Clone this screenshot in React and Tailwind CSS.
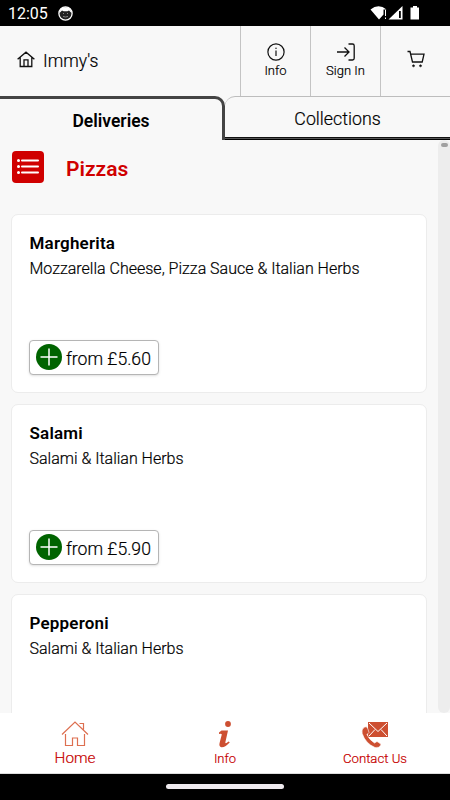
import React, { useState } from 'react';

const menuItems = [
    { id: 1, name: "Margherita", description: "Mozzarella Cheese, Pizza Sauce & Italian Herbs", price: "£5.60" },
    { id: 2, name: "Salami", description: "Salami & Italian Herbs", price: "£5.90" },
    { id: 3, name: "Pepperoni", description: "Salami & Italian Herbs", price: null },
];

function StatusBar() {
    return (
        <div className="h-[26px] shrink-0 bg-black text-white flex items-center justify-between pl-[8px] pr-[30px]">
            <div className="flex items-center gap-[10px] pt-[2px]">
                <span className="text-[16px] leading-none">12:05</span>
                <svg className="w-[15px] h-[15px] -mt-px" viewBox="0 0 15 15">
                    <circle cx="7.5" cy="7.5" r="6.6" fill="#222" stroke="#fff" strokeWidth="1.3" />
                    <path d="M1.500 7C1.800 3.300 4.200 1.200 7.500 1.200S13.200 3.300 13.500 7L11 4.500 9.400 5.200H5.600L4 4.500z" fill="#fff" />
                    <path d="M5 7.500h1M9 7.500h1M5 10.500q2.500 1 5 0" fill="none" stroke="#888" strokeWidth="1" />
                </svg>
            </div>
            <svg className="w-[50px] h-[16px]" viewBox="0 0 50 16">
                <path d="M0.500 4.500Q8.500-2 16.500 4.500H13.500V9.500L9 14.500z" fill="#fff" />
                <path d="M15.500 5v6M15.500 12.500v1.500" stroke="#fff" strokeWidth="1" />
                <path d="M32.500 1v13.500H18.500z" fill="#fff" />
                <path d="M29 6h1.800v7H29z" fill="#000" />
                <path d="M43 1h4v1.500h2V14.500h-8.500V2.500H43z" fill="#fff" />
            </svg>
        </div>
    );
}

function Header() {
    return (
        <header className="h-[70px] shrink-0 flex">
            <a href="#" className="flex-1 flex items-center gap-2 pl-[17px]">
                <svg className="w-[18px] h-[18px] -mt-[4px]" viewBox="0 0 18 18" fill="none" stroke="#111" strokeWidth="1.3">
                    <path d="M0.600 9.200 9 2.200l8.400 7M3.200 7.500V16.500h11.600V7.500M7 16.500V9.800h4V16.500" />
                </svg>
                <span className="text-[17.500px] font-light [-webkit-text-stroke:0.2px] pt-px">Immy's</span>
            </a>
            <button className="w-[70px] border-l border-[#c4c4c4] flex flex-col items-center justify-center pt-[2px]">
                <svg className="w-[18px] h-[18px]" viewBox="0 0 18 18" fill="none" stroke="#111" strokeWidth="1.2">
                    <circle cx="9" cy="9" r="8.100" />
                    <path d="M9 7.500V13" strokeWidth="1.200" />
                    <circle cx="9" cy="5.200" r="0.500" fill="#111" strokeWidth="0.400" />
                </svg>
                <span className="text-[13px] leading-[20px] font-light [-webkit-text-stroke:0.2px]">Info</span>
            </button>
            <button className="w-[70px] border-l border-[#c4c4c4] flex flex-col items-center justify-center pt-[2px]">
                <svg className="w-[18px] h-[18px]" viewBox="0 0 18 18" fill="none" stroke="#111" strokeWidth="1.300">
                    <path d="M0 9h11.500M7.500 4.500 12 9l-4.500 4.500M11.500 1h4q1.700 0 1.700 1.700V15.300q0 1.700-1.700 1.700H11.500" />
                </svg>
                <span className="text-[13px] leading-[20px] font-light [-webkit-text-stroke:0.2px]">Sign In</span>
            </button>
            <button className="w-[70px] border-l border-[#c4c4c4] flex items-center justify-center">
                <svg className="w-[18px] h-[18px] -mt-[4px]" viewBox="0 0 18 18" fill="none" stroke="#111" strokeWidth="1.300">
                    <path d="M0.500 1.500H3L5.500 12H15.200L17 4.200H3.700" />
                    <circle cx="6.500" cy="15.800" r="1" fill="#111" strokeWidth="0.600" />
                    <circle cx="13.500" cy="15.800" r="1" fill="#111" strokeWidth="0.600" />
                </svg>
            </button>
        </header>
    );
}

function MenuCard({ item }) {
    return (
        <div className="h-[179px] shrink-0 bg-white border border-[#ececec] rounded-[7px] px-[17px] pt-[16px] pb-[17px] flex flex-col">
            <h3 className="text-[17px] leading-[25px] font-semibold tracking-[0.2px] pl-[0.500px]">{item.name}</h3>
            <p className="text-[16px] leading-[22px] mt-[2px] pl-[0.500px] font-light [-webkit-text-stroke:0.2px] whitespace-nowrap">{item.description}</p>
            {item.price && (
                <button className="mt-auto self-start w-[130px] h-[35px] border border-[#b5b5b5] rounded-[4px] shadow-sm bg-white flex items-center gap-[4px] pl-[6px]">
                    <svg className="w-[26px] h-[26px] -mt-px" viewBox="0 0 26 26">
                        <circle cx="13" cy="13" r="13" fill="#006400" />
                        <path d="M13 4.500v17M4.500 13h17" stroke="#fff" strokeWidth="1.500" />
                    </svg>
                    <span className="text-[17.600px] font-light [-webkit-text-stroke:0.2px] whitespace-nowrap pt-[3px]">from {item.price}</span>
                </button>
            )}
        </div>
    );
}

function BottomNav() {
    return (
        <nav className="h-[61px] shrink-0 bg-white border-b border-[#dddddd] grid grid-cols-3 text-[#c60000]">
            <a href="#" className="flex flex-col items-center pt-[8px]">
                <svg className="w-[28px] h-[26px]" viewBox="0 0 28 26" fill="none" stroke="#dd6f50" strokeWidth="1.200">
                    <path d="M1 13.500 14 1l13 12.500M18.500 2.500h4v6M4.500 13v11.500h7v-7.500h5v7.500h7V13" />
                </svg>
                <span className="text-[15.300px] leading-[22px] font-light [-webkit-text-stroke:0.2px]">Home</span>
            </a>
            <a href="#" className="flex flex-col items-center pt-[8px]">
                <svg className="w-[16px] h-[28px]" viewBox="0 0 16 28" fill="#cd4f31">
                    <circle cx="11" cy="3" r="2.900" />
                    <path d="M2 11.500 4.500 9.500H11L8.300 21.500Q8.500 23.200 11.500 20.500L12.800 21.300Q8.500 26.500 4.500 26.300 1.500 25.500 2.700 21.500L4.800 13.500Q4.500 12.200 2 13z" />
                </svg>
                <span className="text-[13px] leading-[20px] font-light [-webkit-text-stroke:0.2px]">Info</span>
            </a>
            <a href="#" className="flex flex-col items-center pt-[8px]">
                <svg className="w-[28px] h-[28px]" viewBox="0 0 28 28">
                    <path d="M7 1h20v15H7z" fill="#cd4f31" />
                    <path d="M8 2 17 10.500 26 2M8 15l6-6.500M26 15l-6-6.500" stroke="#fff" strokeWidth="1" fill="none" />
                    <path d="M3.500 6Q0 8.500 1.200 12.500 4.500 22.500 14 26.500q4 .8 6-2.500Q20.300 22.800 16 20.500L13.500 22Q8 18.500 6 13.500L8 11.500Q7 7 5.500 5.800z" fill="#cd4f31" stroke="#fff" strokeWidth="0.600" />
                </svg>
                <span className="text-[13.200px] leading-[20px] font-light [-webkit-text-stroke:0.2px]">Contact Us</span>
            </a>
        </nav>
    );
}

function App() {
    const [tab, setTab] = useState("deliveries");

    const tabClass = (name) => tab === name
        ? "border-t-[3px] border-[#444444] font-semibold pt-[4px]"
        : "border-t border-b border-t-[#bdbdbd] border-b-black font-light [-webkit-text-stroke:0.2px] pt-[3px] shadow-[inset_0_-1px_0_#555,inset_0_-2px_0_#111]";

    return (
        <div className="w-[450px] h-[800px] overflow-hidden flex flex-col bg-[#f8f8f8] text-black font-['Roboto',sans-serif]">
            <StatusBar />
            <Header />
            <div className="h-[44px] shrink-0 flex">
                <button onClick={() => setTab("deliveries")} className={`w-[225px] border-r-[3px] rounded-tr-[10px] text-[17.500px] ${tabClass("deliveries")}`}>Deliveries</button>
                <button onClick={() => setTab("collections")} className={`flex-1 rounded-tl-[10px] text-[17.800px] ${tabClass("collections")}`}>Collections</button>
            </div>
            <main className="flex-1 min-h-0 flex overflow-hidden">
                <div className="flex-1 flex flex-col pl-[11px] pr-[11px] overflow-hidden">
                    <div className="h-[74px] shrink-0 flex items-start pt-[11px] pl-px gap-[22px]">
                        <svg className="w-[32px] h-[32px]" viewBox="0 0 32 32">
                            <rect width="32" height="32" rx="4" fill="#d00000" />
                            <path d="M10 9.500h16M10 15.500h16M10 21.500h16" stroke="#fff" strokeWidth="2" strokeLinecap="round" />
                            <path d="M6.500 9.500h.01M6.500 15.500h.01M6.500 21.500h.01" stroke="#fff" strokeWidth="3" strokeLinecap="round" />
                        </svg>
                        <h2 className="text-[21px] leading-[36px] font-semibold text-[#d00000]">Pizzas</h2>
                    </div>
                    <div className="flex flex-col gap-[11px]">
                        {menuItems.map((item) => <MenuCard key={item.id} item={item} />)}
                    </div>
                </div>
                <div className="w-[12px] bg-[#ededed] rounded-[6px] pt-[3px] flex justify-center items-start">
                    <div className="w-[7px] h-[4px] rounded-full bg-[#a0a0a0]"></div>
                </div>
            </main>
            <BottomNav />
            <div className="h-[26px] shrink-0 bg-black flex justify-center pt-[10px]">
                <div className="w-[118px] h-[5px] rounded-full bg-[#eeeaee]"></div>
            </div>
        </div>
    );
}

export default App;
